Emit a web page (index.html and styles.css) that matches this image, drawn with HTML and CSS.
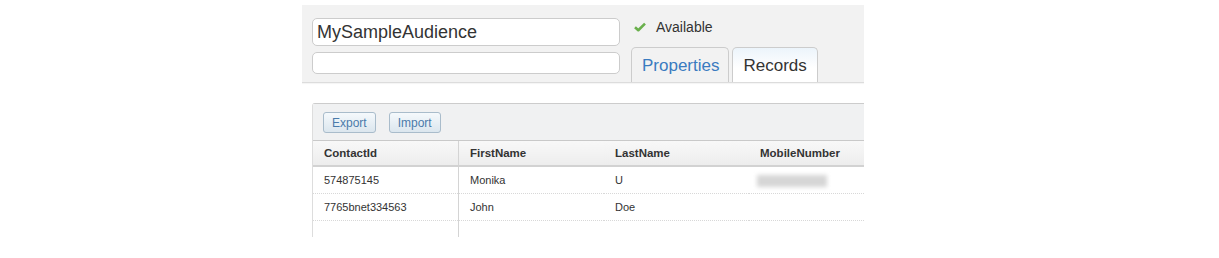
FILE: index.html
```html
<!DOCTYPE html>
<html lang="en">
<head>
  <meta charset="UTF-8" />
  <title>Audience - Records</title>
  <link rel="stylesheet" href="styles.css">
</head>
<body>
  <div class="page">
    <div class="editor">
      <div class="fields">
        <input class="name-input" type="text" value="MySampleAudience" />
        <input class="desc-input" type="text" value="" />
      </div>
      <div class="side">
        <div class="status">
          <svg class="check" width="12" height="10" viewBox="0 0 12 10">
            <path d="M1 5.2 L4.3 8.2 L11 1.6" fill="none" stroke="#6ab04c" stroke-width="2.6" stroke-linejoin="round" />
          </svg>
          <span>Available</span>
        </div>
        <div class="tabs">
          <div class="tab">Properties</div>
          <div class="tab active">Records</div>
        </div>
      </div>
    </div>

    <div class="records">
      <div class="toolbar">
        <button class="btn">Export</button>
        <button class="btn">Import</button>
      </div>
      <table class="grid">
        <thead>
          <tr>
            <th class="first">ContactId</th>
            <th>FirstName</th>
            <th>LastName</th>
            <th>MobileNumber</th>
          </tr>
        </thead>
        <tbody>
          <tr>
            <td class="first">574875145</td>
            <td>Monika</td>
            <td>U</td>
            <td><span class="hidden-number"></span></td>
          </tr>
          <tr>
            <td class="first">7765bnet334563</td>
            <td>John</td>
            <td>Doe</td>
            <td></td>
          </tr>
          <tr class="filler">
            <td class="first"></td>
            <td></td>
            <td></td>
            <td></td>
          </tr>
        </tbody>
      </table>
    </div>
  </div>
</body>
</html>
```

FILE: styles.css
```css
body {
  margin: 0;
  background-color: #ffffff;
  font-family: 'Liberation Sans', Arial, sans-serif;
  color: #333333;
}

.page {
  width: 562px;
  margin-left: 302px;
  padding-top: 5px;
  overflow: hidden;
}

/* top editor panel */
.editor {
  display: flex;
  height: 77px;
  background-color: #f2f2f2;
  border-bottom: 1px solid #dcdcdc;
  box-shadow: 0 1px 1px rgba(0, 0, 0, 0.04);
}

.fields {
  display: flex;
  flex-direction: column;
  gap: 6px;
  padding: 13px 0 0 10px;
  width: 308px;
}

.fields input {
  box-sizing: border-box;
  width: 308px;
  margin: 0;
  border: 1px solid #cccccc;
  border-radius: 5px;
  background-color: #ffffff;
  font-family: 'Liberation Sans', Arial, sans-serif;
  color: #333333;
  outline: none;
}

.name-input {
  height: 28px;
  padding: 0 4px;
  font-size: 18px;
}

.desc-input {
  height: 22px;
  padding: 0 4px;
  font-size: 13px;
}

.side {
  display: flex;
  flex-direction: column;
  justify-content: space-between;
  margin-left: 11px;
}

.status {
  display: flex;
  align-items: center;
  gap: 10px;
  padding: 14px 0 0 3px;
  font-size: 14px;
  color: #333333;
}

.check {
  display: block;
}

.tabs {
  display: flex;
  gap: 3px;
}

.tab {
  box-sizing: border-box;
  height: 35px;
  padding: 8px 9px 0 10px;
  border: 1px solid #cccccc;
  border-bottom: none;
  border-radius: 5px 5px 0 0;
  background-color: #f2f2f2;
  font-size: 17px;
  color: #3a7bc0;
}

.tab.active {
  padding-right: 10px;
  background: linear-gradient(#ecf4fb, #ffffff 60%);
  color: #333333;
}

/* records grid */
.records {
  margin: 20px 0 0 10px;
  border-top: 1px solid #cccccc;
  border-left: 1px solid #dddddd;
  border-top-left-radius: 3px;
}

.toolbar {
  display: flex;
  gap: 13px;
  height: 37px;
  padding: 8px 0 0 10px;
  box-sizing: border-box;
  background-color: #f0f1f2;
  border-bottom: 1px solid #c9c9c9;
}

.btn {
  height: 21px;
  padding: 0 8px;
  border: 1px solid #a9bccb;
  border-radius: 3px;
  background: linear-gradient(#f5f9fc, #dbe6ee);
  font-family: 'Liberation Sans', Arial, sans-serif;
  font-size: 12px;
  color: #4b7bab;
}

.grid {
  width: 581px;
  border-collapse: collapse;
  table-layout: fixed;
}

.grid th,
.grid td {
  width: 123px;
  padding: 0 11px;
  text-align: left;
  font-size: 11px;
  white-space: nowrap;
}

.grid th {
  height: 24px;
  background: linear-gradient(#f8f8f8, #ededed);
  border-bottom: 2px solid #d2d2d2;
  font-weight: bold;
  font-size: 11.5px;
  color: #333333;
}

.grid td {
  height: 26px;
  border-bottom: 1px dotted #d8d8d8;
  color: #333333;
}

.grid th.first,
.grid td.first {
  width: 123px;
  border-right: 1px solid #d4d4d4;
}

.grid .filler td {
  height: 16px;
  border-bottom: none;
}

.hidden-number {
  display: inline-block;
  width: 70px;
  height: 12px;
  margin-left: -3px;
  vertical-align: middle;
  background-color: #d6d6d6;
  filter: blur(2px);
}
```
